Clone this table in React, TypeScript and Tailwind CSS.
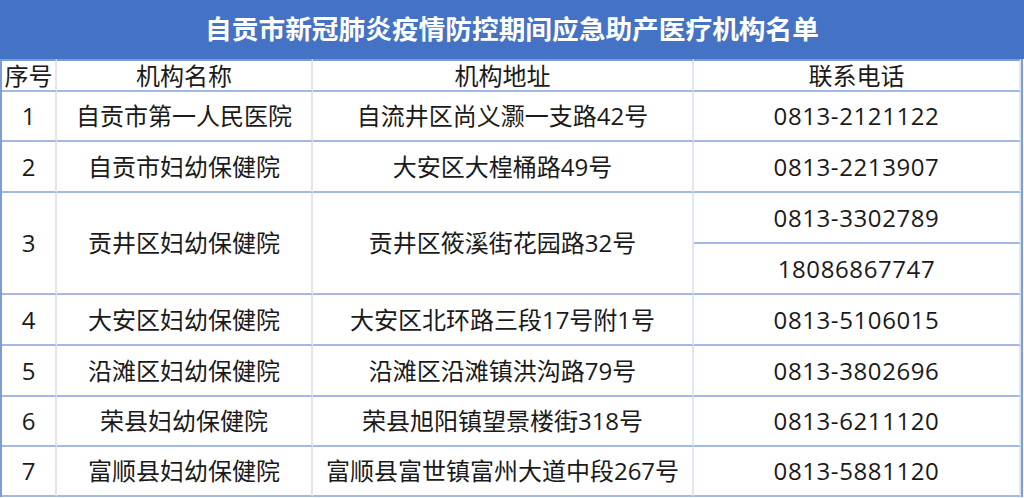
import React from "react";

type Row = { no: string; name: string; addr: string; phones: string[] };

const rows: Row[] = [
  { no: "1", name: "自贡市第一人民医院", addr: "自流井区尚义灏一支路42号", phones: ["0813-2121122"] },
  { no: "2", name: "自贡市妇幼保健院", addr: "大安区大楻桶路49号", phones: ["0813-2213907"] },
  { no: "3", name: "贡井区妇幼保健院", addr: "贡井区筱溪街花园路32号", phones: ["0813-3302789", "18086867747"] },
  { no: "4", name: "大安区妇幼保健院", addr: "大安区北环路三段17号附1号", phones: ["0813-5106015"] },
  { no: "5", name: "沿滩区妇幼保健院", addr: "沿滩区沿滩镇洪沟路79号", phones: ["0813-3802696"] },
  { no: "6", name: "荣县妇幼保健院", addr: "荣县旭阳镇望景楼街318号", phones: ["0813-6211120"] },
  { no: "7", name: "富顺县妇幼保健院", addr: "富顺县富世镇富州大道中段267号", phones: ["0813-5881120"] },
];

const cell =
  "flex items-center justify-center border-b-2 border-r-2 border-b-[#a3b9e4] border-r-[#e2e6f2] whitespace-nowrap";

export default function App() {
  return (
    <div
      className="w-[1024px] h-[498px] bg-white text-[#1a1a1a] overflow-hidden"
      style={{ fontFamily: '"Open Sans", "Noto Sans CJK SC", sans-serif' }}
    >
      {/* 标题 */}
      <div className="h-[59px] bg-[#4472c4] flex items-center justify-center">
        <h1 className="text-white font-bold text-[26.7px] leading-none">
          自贡市新冠肺炎疫情防控期间应急助产医疗机构名单
        </h1>
      </div>

      {/* 表格 */}
      <div className="grid grid-cols-[55px_256px_381px_1fr] grid-rows-[33px_50px_51px_51px_51px_51px_51px_50px_50px] border-l-2 border-l-[#7e9bd6] mr-[1px] border-r-2 border-r-[#7e9bd6] text-[24px] leading-none">
        <div className={`${cell} border-t-2 border-t-[#7e9bd6]`}>序号</div>
        <div className={`${cell} border-t-2 border-t-[#7e9bd6]`}>机构名称</div>
        <div className={`${cell} border-t-2 border-t-[#7e9bd6]`}>机构地址</div>
        <div className={`${cell} border-t-2 border-t-[#7e9bd6] border-r-0`}>联系电话</div>

        {rows.map((r) => {
          const span = r.phones.length > 1 ? "row-span-2" : "";
          return (
            <React.Fragment key={r.no}>
              <div className={`${cell} ${span}`}>{r.no}</div>
              <div className={`${cell} ${span}`}>{r.name}</div>
              <div className={`${cell} ${span}`}>{r.addr}</div>
              {r.phones.map((p) => (
                <div key={p} className={`${cell} border-r-0 tracking-[0.6px]`}>
                  {p}
                </div>
              ))}
            </React.Fragment>
          );
        })}
      </div>
    </div>
  );
}
